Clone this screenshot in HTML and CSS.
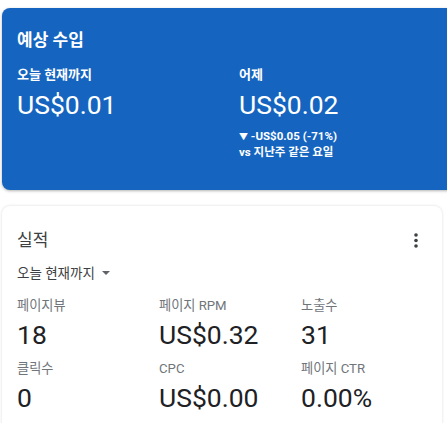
FILE: index.html
```html
<!DOCTYPE html>
<html lang="ko">
<head>
    <meta charset="UTF-8">
    <meta name="viewport" content="width=device-width, initial-scale=1.0">
    <title>예상 수입</title>
    <link rel="stylesheet" href="styles.css">
</head>
<body>
<div class="page">
    <!-- 예상 수입 카드 -->
    <section class="card earnings">
        <h2 class="earnings-title">예상 수입</h2>
        <div class="earnings-cols">
            <div class="earnings-col">
                <div class="earnings-label">오늘 현재까지</div>
                <div class="earnings-value">US$0.01</div>
            </div>
            <div class="earnings-col">
                <div class="earnings-label">어제</div>
                <div class="earnings-value">US$0.02</div>
                <div class="earnings-delta first"><span class="down">▼</span> -US$0.05 (-71%)</div>
                <div class="earnings-delta">vs 지난주 같은 요일</div>
            </div>
        </div>
    </section>

    <!-- 실적 카드 -->
    <section class="card perf">
        <div class="perf-head">
            <h2 class="perf-title">실적</h2>
            <span class="more">
                <svg width="4" height="15" viewBox="0 0 4 15"><circle cx="2" cy="2" r="1.8"/><circle cx="2" cy="7.5" r="1.8"/><circle cx="2" cy="13" r="1.8"/></svg>
            </span>
        </div>
        <div class="range">오늘 현재까지 <span class="caret"></span></div>
        <div class="metrics">
            <div class="metric"><div class="metric-label">페이지뷰</div><div class="metric-value">18</div></div>
            <div class="metric"><div class="metric-label">페이지 RPM</div><div class="metric-value">US$0.32</div></div>
            <div class="metric"><div class="metric-label">노출수</div><div class="metric-value">31</div></div>
            <div class="metric"><div class="metric-label">클릭수</div><div class="metric-value">0</div></div>
            <div class="metric"><div class="metric-label">CPC</div><div class="metric-value">US$0.00</div></div>
            <div class="metric"><div class="metric-label">페이지 CTR</div><div class="metric-value">0.00%</div></div>
        </div>
    </section>
</div>
</body>
</html>
```

FILE: styles.css
```css
* {
    margin: 0;
    padding: 0;
    box-sizing: border-box;
    font-family: Roboto, "Noto Sans CJK KR", sans-serif;
}
body {
    background: #fff;
    overflow: hidden;
}
.page {
    padding: 8px 5px 0 2px;
    display: flex;
    flex-direction: column;
    gap: 16px;
}
.card {
    border-radius: 8px;
}
/* Синяя карточка */
.earnings {
    background: #1565c0;
    color: #fff;
    height: 182px;
    margin-right: -20px;
    padding: 21px 15px 0;
    box-shadow: 0 1px 3px rgba(0,0,0,0.3);
}
.earnings-title {
    font-size: 17px;
    font-weight: 700;
    line-height: 22px;
}
.earnings-cols {
    display: flex;
    margin-top: 15px;
}
.earnings-col {
    flex: none;
    width: 222px;
}
.earnings-label {
    font-size: 13px;
    font-weight: 700;
    line-height: 18px;
}
.earnings-value {
    font-size: 26.5px;
    line-height: 32px;
    margin-top: 5px;
}
.earnings-delta {
    font-size: 11.5px;
    font-weight: 700;
    line-height: 15px;
}
.earnings-delta.first {
    margin-top: 8px;
}
.down {
    font-size: 9px;
}
/* Белая карточка */
.perf {
    background: #fff;
    height: 240px;
    padding: 22px 15px 0;
    box-shadow: 0 0 3px rgba(0,0,0,0.15);
}
.perf-head {
    display: flex;
    justify-content: space-between;
    align-items: center;
}
.perf-title {
    font-size: 17px;
    font-weight: 400;
    color: #3c4043;
    line-height: 24px;
}
.more {
    display: flex;
    fill: #3c4043;
    margin-right: 9px;
}
.range {
    font-size: 13.5px;
    color: #3c4043;
    margin-top: 11px;
    line-height: 20px;
    display: flex;
    align-items: center;
    gap: 7px;
}
.caret {
    width: 0;
    height: 0;
    border-left: 4px solid transparent;
    border-right: 4px solid transparent;
    border-top: 4px solid #5f6368;
}
.metrics {
    display: grid;
    grid-template-columns: 142px 142px 1fr;
    row-gap: 8px;
    margin-top: 14px;
}
.metric-label {
    font-size: 13.2px;
    color: #70757a;
    line-height: 18px;
}
.metric-value {
    font-size: 26.5px;
    color: #202124;
    line-height: 34px;
    margin-top: 3px;
}
```
